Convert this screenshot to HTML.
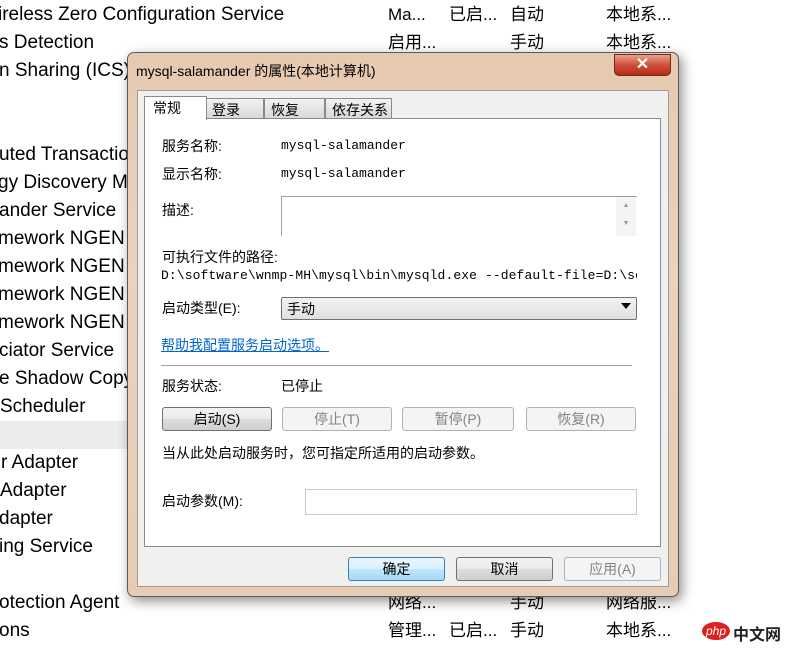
<!DOCTYPE html>
<html><head><meta charset="utf-8"><style>
*{margin:0;padding:0;box-sizing:border-box}
body{width:793px;height:651px;overflow:hidden;background:#fff;position:relative;font-family:"Liberation Sans","Noto Sans CJK SC",sans-serif;color:#000}
.r{position:absolute;font-size:19px;line-height:28px;white-space:nowrap}
.c{position:absolute;font-size:17px;line-height:28px;white-space:nowrap}
.a{position:absolute;white-space:nowrap;font-size:14px;font-family:"Liberation Sans","Noto Sans CJK SC",sans-serif}
.btn{position:absolute;height:24px;border:1px solid #707070;border-radius:3px;background:linear-gradient(#f2f2f2 0,#ebebeb 50%,#dddddd 51%,#cfcfcf 100%);font-size:14px;text-align:center;line-height:22px;font-family:"Liberation Sans","Noto Sans CJK SC",sans-serif}
.dis{border-color:#adb2b5;background:#f4f4f4;color:#838383}
</style></head><body>
<div style="position:absolute;left:0;top:421px;width:130px;height:28px;background:#ececec"></div>
<div class="r" style="left:-2px;top:1px">ireless Zero Configuration Service</div>
<div class="r" style="left:-1px;top:29px">s Detection</div>
<div class="r" style="left:-1px;top:57px">n Sharing (ICS)</div>
<div class="r" style="left:-1px;top:141px">uted Transaction</div>
<div class="r" style="left:-2px;top:169px">gy Discovery M</div>
<div class="r" style="left:-1px;top:197px">ander Service</div>
<div class="r" style="left:-2px;top:225px">mework NGEN</div>
<div class="r" style="left:-2px;top:253px">mework NGEN</div>
<div class="r" style="left:-2px;top:281px">mework NGEN</div>
<div class="r" style="left:-2px;top:309px">mework NGEN</div>
<div class="r" style="left:-1px;top:337px">ciator Service</div>
<div class="r" style="left:-1px;top:365px">e Shadow Copy</div>
<div class="r" style="left:0;top:393px">Scheduler</div>
<div class="r" style="left:1px;top:449px">r Adapter</div>
<div class="r" style="left:0;top:477px">Adapter</div>
<div class="r" style="left:-1px;top:505px">dapter</div>
<div class="r" style="left:-1px;top:533px">ing Service</div>
<div class="r" style="left:-1px;top:589px">otection Agent</div>
<div class="r" style="left:-1px;top:617px">ons</div>
<div class="c" style="left:388px;top:1px">Ma...</div><div class="c" style="left:449px;top:1px">已启...</div><div class="c" style="left:510px;top:1px">自动</div><div class="c" style="left:606px;top:1px">本地系...</div>
<div class="c" style="left:388px;top:29px">启用...</div><div class="c" style="left:510px;top:29px">手动</div><div class="c" style="left:606px;top:29px">本地系...</div>
<div class="c" style="left:388px;top:589px">网络...</div><div class="c" style="left:510px;top:589px">手动</div><div class="c" style="left:606px;top:589px">网络服...</div>
<div class="c" style="left:388px;top:617px">管理...</div><div class="c" style="left:449px;top:617px">已启...</div><div class="c" style="left:510px;top:617px">手动</div><div class="c" style="left:606px;top:617px">本地系...</div>
<div style="position:absolute;left:702px;top:622px;width:28px;height:18px;border-radius:50%;background:#e02020;color:#fff;font-size:12px;line-height:18px;text-align:center;font-style:italic">php</div>
<div style="position:absolute;left:733px;top:621px;font-size:16px;color:#222;font-weight:bold">中文网</div>

<!-- dialog -->
<div style="position:absolute;left:127px;top:52px;width:552px;height:545px;border:1px solid #5a5a5a;border-radius:7px;background:linear-gradient(#e6c9b0,#ebd2bc 40%,#e8cbb2);box-shadow:3px 4px 12px rgba(0,0,0,.45)"></div>
<div class="a" style="left:136px;top:61px;font-size:14px">mysql-salamander 的属性(本地计算机)</div>
<div style="position:absolute;left:614px;top:54px;width:57px;height:22px;border:1px solid #6d2a20;border-radius:0 0 5px 5px;background:linear-gradient(#e8a090,#d0503a 50%,#b82a14);color:#fff;font-weight:bold;font-size:16px;text-align:center;line-height:20px">✕</div>
<div style="position:absolute;left:137px;top:90px;width:532px;height:497px;background:#f0f0f0;border:1px solid #9c9c9c"></div>
<!-- tabs -->
<div style="position:absolute;left:144px;top:118px;width:517px;height:429px;background:#fff;border:1px solid #8a8a8a"></div>
<div class="a" style="left:206px;top:98px;width:58px;height:21px;border:1px solid #8a8a8a;background:linear-gradient(#f2f2f2,#d8d8d8);padding:1px 0 0 5px;font-size:14px">登录</div>
<div class="a" style="left:264px;top:98px;width:61px;height:21px;border:1px solid #8a8a8a;background:linear-gradient(#f2f2f2,#d8d8d8);padding:1px 0 0 6px;font-size:14px">恢复</div>
<div class="a" style="left:325px;top:98px;width:67px;height:21px;border:1px solid #8a8a8a;background:linear-gradient(#f2f2f2,#d8d8d8);padding:1px 0 0 6px;font-size:14px">依存关系</div>
<div class="a" style="left:144px;top:96px;width:63px;height:24px;border:1px solid #8a8a8a;border-bottom:none;background:#fff;padding:1px 0 0 8px;font-size:14px">常规</div>

<div class="a" style="left:162px;top:136px">服务名称:</div>
<div class="a" style="left:281px;top:138px;font-family:'Liberation Mono',monospace;font-size:13px">mysql-salamander</div>
<div class="a" style="left:162px;top:164px">显示名称:</div>
<div class="a" style="left:281px;top:166px;font-family:'Liberation Mono',monospace;font-size:13px">mysql-salamander</div>
<div class="a" style="left:162px;top:200px">描述:</div>
<div style="position:absolute;left:281px;top:196px;width:356px;height:40px;border:1px solid #a0a0a0;border-bottom:none;border-right:none;background:#fff"></div>
<div style="position:absolute;left:616px;top:197px;width:20px;height:39px;background:#f4f4f4;font-size:7px;color:#999;text-align:center;line-height:18px">▲<br>▼</div>
<div class="a" style="left:162px;top:247px">可执行文件的路径:</div>
<div class="a" style="left:161px;top:268px;width:476px;overflow:hidden;font-family:'Liberation Mono',monospace;font-size:13px;letter-spacing:0.1px">D:\software\wnmp-MH\mysql\bin\mysqld.exe --default-file=D:\so</div>
<div class="a" style="left:162px;top:298px">启动类型(E):</div>
<div style="position:absolute;left:281px;top:297px;width:356px;height:23px;border:1px solid #707070;border-radius:2px;background:linear-gradient(#f2f2f2,#e0e0e0);font-size:14px;padding:1px 0 0 5px">手动<span style="position:absolute;right:5px;top:5px;width:0;height:0;border-left:5px solid transparent;border-right:5px solid transparent;border-top:6px solid #000"></span></div>
<div class="a" style="left:161px;top:335px;color:#0066cc;text-decoration:underline;font-size:14px">帮助我配置服务启动选项。</div>
<div style="position:absolute;left:161px;top:365px;width:471px;height:1px;background:#a0a0a0"></div>
<div class="a" style="left:162px;top:376px">服务状态:</div>
<div class="a" style="left:281px;top:376px;font-size:14px">已停止</div>
<div class="btn" style="left:162px;top:407px;width:110px">启动(S)</div>
<div class="btn dis" style="left:282px;top:407px;width:110px">停止(T)</div>
<div class="btn dis" style="left:402px;top:407px;width:112px">暂停(P)</div>
<div class="btn dis" style="left:526px;top:407px;width:110px">恢复(R)</div>
<div class="a" style="left:162px;top:443px">当从此处启动服务时，您可指定所适用的启动参数。</div>
<div class="a" style="left:162px;top:491px">启动参数(M):</div>
<div style="position:absolute;left:305px;top:489px;width:332px;height:26px;border:1px solid #c8c8c8;background:#fff"></div>

<div class="btn" style="left:348px;top:557px;width:97px;border-color:#3c7fb1;background:linear-gradient(#eaf6fd,#d9f0fc 50%,#bee6fd 51%,#a7d9f5)">确定</div>
<div class="btn" style="left:456px;top:557px;width:97px">取消</div>
<div class="btn dis" style="left:564px;top:557px;width:97px">应用(A)</div>
</body></html>
